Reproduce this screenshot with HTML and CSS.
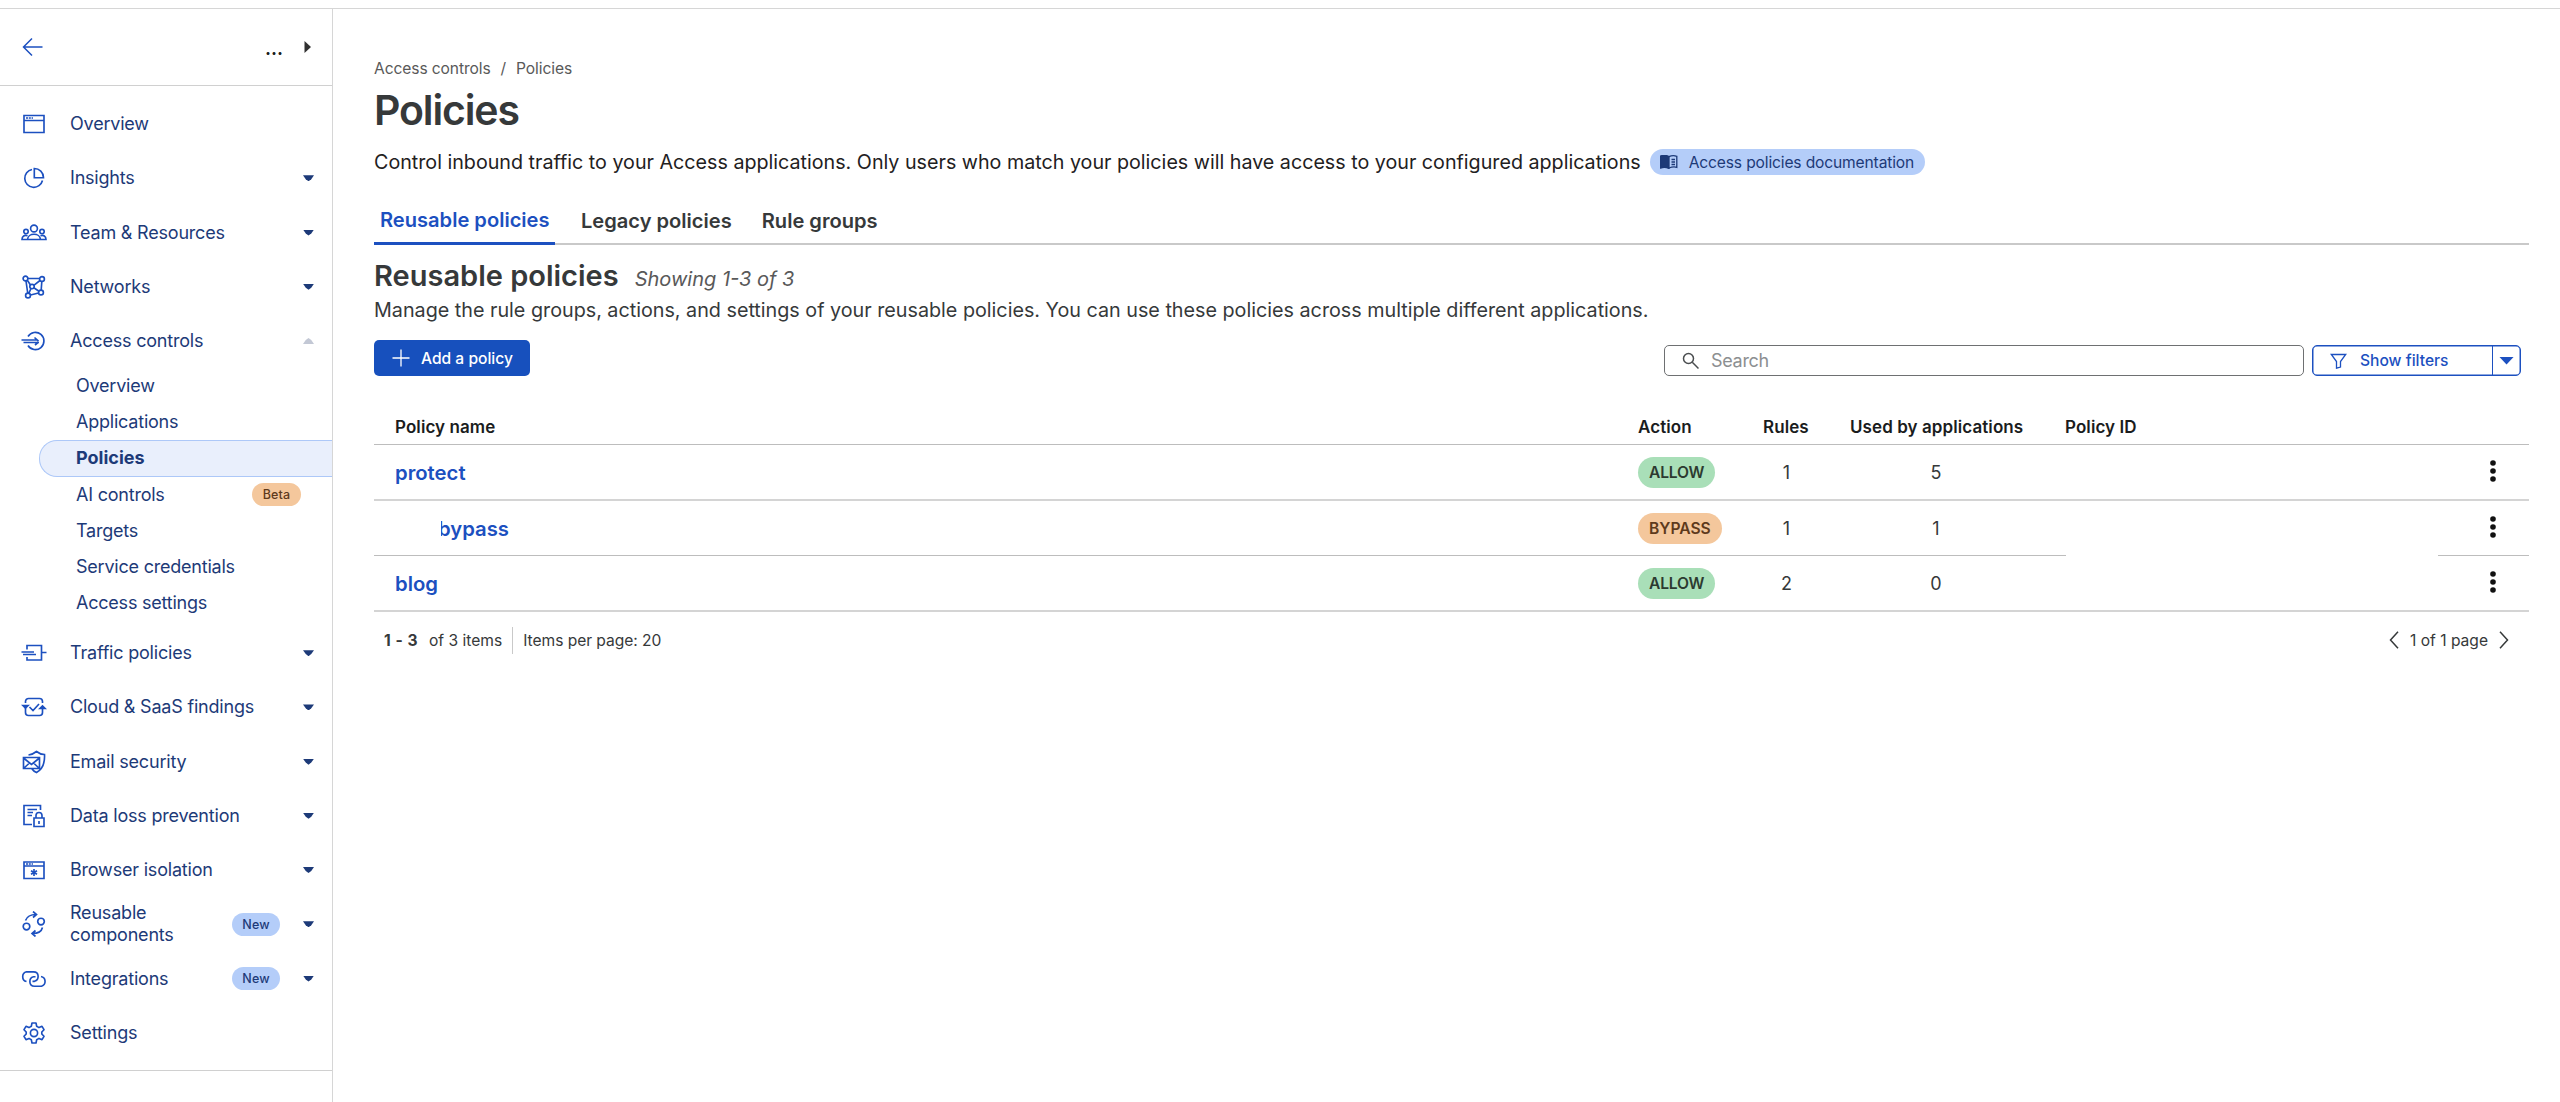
FILE: index.html
```html
<!DOCTYPE html>
<html lang="en">
<head>
<meta charset="utf-8">
<title>Policies</title>
<link rel="stylesheet" href="styles.css">
</head>
<body>
<div class="app">
  <aside class="sidebar">
    <div class="side-head">
      <svg class="back" viewBox="0 0 22 20"><path d="M20.500 10H1.500M10 1.500L1.500 10L10 18.500"/></svg>
      <span class="account">...</span>
      <svg class="next" viewBox="0 0 7 12"><path d="M0.500 0L7 6L0.500 12Z"/></svg>
    </div>
    <nav class="nav">
      <a class="item"><svg class="ico" viewBox="0 0 26 26"><path d="M3 4.500H23V21.500H3ZM3 9.500H23"/><path d="M5 7H12" stroke-dasharray="2 0.800"/></svg><span class="label">Overview</span></a>
      <a class="item"><svg class="ico" viewBox="0 0 26 26"><path d="M11 4.500A9 9 0 1 0 21.500 15.500M13.300 3.500V12.700H22.500A9.200 9.200 0 0 0 13.300 3.500Z"/></svg><span class="label">Insights</span><i class="caret"></i></a>
      <a class="item"><svg class="ico" viewBox="0 0 26 26"><circle cx="13" cy="8.500" r="3.400"/><circle cx="5" cy="11.500" r="2.200"/><circle cx="21" cy="11.500" r="2.200"/><path d="M6.500 19.500C7 12.500 19 12.500 19.500 19.500H1C1 16 3.500 14.800 6.500 15.800M19.500 15.800C22.500 14.800 25 16 25 19.500H19"/></svg><span class="label">Team &amp; Resources</span><i class="caret"></i></a>
      <a class="item"><svg class="ico" viewBox="0 0 26 26"><circle cx="4.500" cy="4.500" r="2.400"/><circle cx="21" cy="5" r="2.400"/><circle cx="11" cy="12.500" r="2.200"/><circle cx="20" cy="18.500" r="2.400"/><circle cx="7" cy="21.500" r="2.400"/><path d="M7 4.500H18.500M5 7L6.700 19M20.800 7.500L20.200 16M9.500 21L17.600 19M6.300 6.200L9.500 11M12.800 11.300L19 6.500M12.800 13.800L18 17.200M10 14.500L7.800 19.300"/></svg><span class="label">Networks</span><i class="caret"></i></a>
      <a class="item"><svg class="ico" viewBox="0 0 26 26"><path d="M7 8.500A8.600 8.600 0 1 1 7 17.500M0.500 12H16.500M2.500 14.500H18M13.500 9.500L17.500 13.200M17.500 14L14 17"/></svg><span class="label">Access controls</span><i class="caret up"></i></a>
      <div class="sub">
        <a class="subitem"><span>Overview</span></a>
        <a class="subitem"><span>Applications</span></a>
        <a class="subitem active"><span>Policies</span></a>
        <a class="subitem"><span>AI controls</span><em class="tag beta">Beta</em></a>
        <a class="subitem"><span>Targets</span></a>
        <a class="subitem"><span>Service credentials</span></a>
        <a class="subitem"><span>Access settings</span></a>
      </div>
      <a class="item"><svg class="ico" viewBox="0 0 26 26"><path d="M6 9.500V5.500H20.500V20H6V17M0.500 12H13M2 14.500H15M20.500 12.500H25.500"/></svg><span class="label">Traffic policies</span><i class="caret"></i></a>
      <a class="item"><svg class="ico" viewBox="0 0 26 26"><path d="M4.500 9V7.500A3 3 0 0 1 7.500 4.500H18.500A3 3 0 0 1 21.500 7.500V9M4.500 14V18.500A3 3 0 0 0 7.500 21.500H18.500A3 3 0 0 0 21.500 18.500V12.500M8.500 13L12 16.500L18 10"/><path class="solid" d="M2 11.500H7L4.500 14ZM19 14.500H24L21.500 12Z"/></svg><span class="label">Cloud &amp; SaaS findings</span><i class="caret"></i></a>
      <a class="item"><svg class="ico" viewBox="0 0 26 26"><path d="M2.500 8.500H18.500V19.500H2.500ZM2.500 9L10.500 15.500L18.500 9M2.500 19.500L8.500 14M18.500 19.500L12.500 14M7.500 6C11 5.500 13 4.500 15.500 2.500C18 4.500 20.500 5.500 23.500 5.500C24 14 22 20 15.500 23.500C13.500 22.700 12 21.500 11 20"/></svg><span class="label">Email security</span><i class="caret"></i></a>
      <a class="item"><svg class="ico" viewBox="0 0 26 26"><path d="M11 21.500H3V2.500H19.500V7M6.500 6.500H16M6.500 9.500H12M6.500 12.500H11M13 15H23V23.500H13ZM15 15V12.500A3 3 0 0 1 21 12.500V15M18 18V21"/></svg><span class="label">Data loss prevention</span><i class="caret"></i></a>
      <a class="item"><svg class="ico" viewBox="0 0 26 26"><path d="M3 5H23V21.500H3ZM3 9H23M13 12V19M10 13.800L16 17.200M16 13.800L10 17.200"/><path d="M5 7H12" stroke-dasharray="2 0.800"/></svg><span class="label">Browser isolation</span><i class="caret"></i></a>
      <a class="item"><svg class="ico" viewBox="0 0 26 26"><circle cx="5.500" cy="15.500" r="3.300"/><circle cx="20" cy="10.500" r="3.300"/><path d="M4.500 9.500C6 5.500 9.500 3.500 15 3.500M12 0.500L15.500 3.500L12 6.500M21.500 16.500C20.500 20.500 17 22.500 11.500 22.500M14.500 19.500L11 22.500L14.500 25.500"/></svg><span class="label two">Reusable components</span><em class="tag new">New</em><i class="caret"></i></a>
      <a class="item"><svg class="ico wide" viewBox="0 0 28 26"><path d="M6.500 15.500A5 5 0 0 1 6.500 5.800H13.500C19.500 5.800 19.500 14 14.500 15.300H12.500M21 10.500A5 5 0 0 1 21.500 20.200H14.500C8.500 20.200 8.500 12 13.500 10.700H15.500"/></svg><span class="label">Integrations</span><em class="tag new">New</em><i class="caret"></i></a>
      <a class="item"><svg class="ico" viewBox="0 0 26 26"><circle cx="13" cy="13" r="3.600"/><path stroke-linejoin="round" d="M11 3H15L15.700 6.300L18 7.600L21 6.300L23 9.700L20.800 12V14L23 16.300L21 19.700L18 18.400L15.700 19.700L15 23H11L10.300 19.700L8 18.400L5 19.700L3 16.300L5.200 14V12L3 9.700L5 6.300L8 7.600L10.300 6.300Z"/></svg><span class="label">Settings</span></a>
    </nav>
  </aside>
  <main class="main">
    <div class="crumbs"><span>Access controls</span><span>/</span><span>Policies</span></div>
    <h1><span>Policies</span></h1>
    <div class="intro">
      <span class="lead">Control inbound traffic to your Access applications. Only users who match your policies will have access to your configured applications</span>
      <a class="doc"><svg viewBox="0 0 18 14"><path class="solid" d="M0.500 1C3.500 0 6.500 0.200 9 1.500V13.500C6.500 12.300 3.500 12.200 0.500 13Z"/><path d="M9 1.700C11.500 0.500 14.500 0.500 16.800 1.300V12.300C14.500 11.700 11.500 12 9 13M11.500 4.500H15M11.500 7H15M11.500 9.500H15"/></svg><span>Access policies documentation</span></a>
    </div>
    <div class="tabs"><a class="tab on"><span>Reusable policies</span></a><a class="tab legacy"><span>Legacy policies</span></a><a class="tab"><span>Rule groups</span></a></div>
    <div class="heading"><h2><span>Reusable policies</span></h2><span class="showing">Showing 1-3 of 3</span></div>
    <p class="desc"><span>Manage the rule groups, actions, and settings of your reusable policies. You can use these policies across multiple different applications.</span></p>
    <div class="toolbar">
      <button class="add"><svg viewBox="0 0 18 18"><path d="M9 0.500V17.500M0.500 9H17.500"/></svg><span>Add a policy</span></button>
      <div class="tools">
        <div class="search"><svg viewBox="0 0 18 18"><circle cx="6.500" cy="6.500" r="5"/><path d="M10.300 10.300L16.500 16.500"/></svg><span>Search</span></div>
        <div class="filter"><div class="fmain"><svg viewBox="0 0 16 16"><path d="M0.800 1.500H15.200L10 8.500V14L6 15.200V8.500Z"/></svg><span>Show filters</span></div><div class="fdrop"><i></i></div></div>
      </div>
    </div>
    <div class="table">
      <div class="row head"><span class="name">Policy name</span><span>Action</span><span class="rules">Rules</span><span class="used">Used by applications</span><span>Policy ID</span></div>
      <div class="row"><a class="name"><span>protect</span></a><div><b class="act allow">ALLOW</b></div><span class="num">1</span><span class="num">5</span><span></span><svg class="more" viewBox="0 0 6 22"><circle cx="3" cy="3" r="2.800"/><circle cx="3" cy="11" r="2.800"/><circle cx="3" cy="19" r="2.800"/></svg></div>
      <div class="row broken"><a class="name indent"><span>bypass</span></a><div><b class="act bypass">BYPASS</b></div><span class="num">1</span><span class="num">1</span><span></span><svg class="more" viewBox="0 0 6 22"><circle cx="3" cy="3" r="2.800"/><circle cx="3" cy="11" r="2.800"/><circle cx="3" cy="19" r="2.800"/></svg></div>
      <div class="row"><a class="name"><span>blog</span></a><div><b class="act allow">ALLOW</b></div><span class="num">2</span><span class="num">0</span><span></span><svg class="more" viewBox="0 0 6 22"><circle cx="3" cy="3" r="2.800"/><circle cx="3" cy="11" r="2.800"/><circle cx="3" cy="19" r="2.800"/></svg></div>
    </div>
    <div class="pager">
      <strong>1 - 3</strong><span class="of">of 3 items</span><span class="per">Items per page: 20</span>
      <div class="pages"><svg viewBox="0 0 10 18"><path d="M9 0.800L1.500 9L9 17.200"/></svg><span>1 of 1 page</span><svg viewBox="0 0 10 18"><path d="M1 0.800L8.500 9L1 17.200"/></svg></div>
    </div>
  </main>
</div>
</body>
</html>
```
FILE: styles.css
```css
* { box-sizing: border-box; }
html, body { height: 100%; }
body { margin: 0; background: #fff; color: #36393a; font-family: Inter, "Liberation Sans", sans-serif; padding-top: 8px; overflow: hidden; }
svg { display: block; fill: none; stroke: currentColor; stroke-width: 1.5; flex: none; }
.solid { fill: currentColor; }
h1, h2, p { margin: 0; }
.app { display: flex; height: 1094px; border-top: 1px solid #d6d6d6; }

/* Sidebar */
.sidebar { width: 333px; flex: none; border-right: 1px solid #d6d6d6; color: #1d3a78; }
.side-head { height: 77px; border-bottom: 1px solid #d0d0d0; display: flex; align-items: center; padding: 0 21px 0 22px; }
.back { width: 22px; height: 20px; color: #1c50c0; }
.account { margin-left: auto; margin-right: 21px; padding-top: 3px; color: #1d1d1d; font-size: 18px; font-weight: 700; line-height: 24px; }
.next { width: 7px; height: 12px; color: #313131; fill: currentColor; stroke: none; }
.nav { height: 985px; padding-top: 11px; border-bottom: 1px solid #d0d0d0; }
.item { height: 54.220px; display: flex; align-items: center; padding: 0 18px 0 21px; }
.ico { width: 26px; height: 26px; color: #1c50c0; stroke-width: 1.650; }
.ico.wide { width: 28px; margin: 0 -1px; }
.label { margin-left: 23px; margin-right: auto; font-size: 18px; line-height: 22px; letter-spacing: -0.200px; }
.label.two { width: 130px; }
.caret { width: 11px; height: 6px; background: #1d3a78; clip-path: polygon(0 0, 100% 0, 75% 65%, 50% 100%, 25% 65%); }
.caret.up { background: #c3c8d5; transform: scaleY(-1); }
.tag { font-style: normal; font-size: 12.500px; font-weight: 500; line-height: 23px; height: 23px; border-radius: 12px; text-align: center; letter-spacing: 0.150px; }
.new { width: 48px; background: #b4cdf9; margin-right: 23px; }
.beta { width: 49px; background: #f4c79c; color: #5e3a1c; margin-left: auto; margin-right: 31px; }
.sub { padding-bottom: 5px; }
.subitem { height: 36.150px; margin-left: 39px; padding-left: 37px; display: flex; align-items: center; font-size: 18px; line-height: 22px; letter-spacing: -0.220px; }
.subitem.active { background: #e9effc; border: 1px solid #adc8f8; border-right: 0; border-radius: 18px 0 0 18px; padding-left: 36px; font-weight: 700; letter-spacing: 0; }

/* Page header */
.main { flex: 1; padding: 49px 31px 0 41px; }
.crumbs { display: flex; gap: 10px; color: #595959; font-size: 15.600px; line-height: 22px; letter-spacing: -0.100px; }
h1 { font-size: 41px; font-weight: 600; line-height: 50px; margin-top: 5px; letter-spacing: -1.150px; }
.intro { display: flex; align-items: center; gap: 9px; height: 30px; color: #1f2122; margin-top: 12px; }
.lead { font-size: 19.690px; white-space: nowrap; }
.doc { display: flex; align-items: center; gap: 11px; width: 275px; height: 26px; border-radius: 13px; background: #b4cdf9; color: #1d3a78; padding-left: 10px; font-size: 15.600px; white-space: nowrap; letter-spacing: -0.150px; }
.doc svg { width: 18px; height: 14px; stroke-width: 1.300; }
.tabs { display: flex; height: 41px; margin-top: 27px; border-bottom: 2px solid #c9c9c9; font-size: 20.100px; font-weight: 600; gap: 26px; }
.tab { line-height: 30px; padding-top: 2px; height: 41px; white-space: nowrap; }
.tab.legacy { margin-right: 4px; }
.tab.on { width: 181px; color: #1c50c0; border-bottom: 3px solid #1c50c0; padding: 1px 0 0 6px; }
.heading { display: flex; align-items: baseline; gap: 16px; height: 40px; margin-top: 11px; }
h2 { font-size: 29px; font-weight: 600; line-height: 40px; }
.showing { font-size: 20px; font-style: italic; color: #595959; }
.desc { font-size: 19.740px; line-height: 28px; white-space: nowrap; }

/* Toolbar */
.toolbar { display: flex; justify-content: space-between; margin-top: 16px; height: 37px; }
.add { display: flex; align-items: center; gap: 11px; width: 156px; height: 36px; padding: 0 0 0 18px; border: 0; border-radius: 5px; background: #1750bd; color: #fff; font: 500 15.600px Inter, sans-serif; white-space: nowrap; }
.add svg { width: 18px; height: 18px; stroke-width: 1.300; }
.tools { display: flex; gap: 8px; padding: 5px 8px 0 0; }
.search { width: 640px; height: 31px; border: 1.500px solid #6e7072; border-radius: 5px; display: flex; align-items: center; gap: 11px; padding-left: 17px; color: #8c8f91; font-size: 18px; letter-spacing: -0.300px; }
.search svg { width: 18px; height: 18px; color: #4a4d4f; }
.filter { width: 209px; height: 31px; border: 1.500px solid #1c50c0; border-radius: 5px; display: flex; color: #1c50c0; font-size: 15.600px; font-weight: 500; box-shadow: inset 0 0 0 0.500px #1c50c0; }
.fmain { flex: 1; display: flex; align-items: center; gap: 13px; padding-left: 17px; }
.fmain svg { width: 17px; height: 16px; stroke-width: 1.300; }
.fdrop { width: 28px; border-left: 1px solid #1c50c0; display: grid; place-items: center; }
.fdrop i { width: 15px; height: 8px; background: #1c50c0; clip-path: polygon(0 0, 100% 0, 50% 100%); }

/* Policy table */
.table { margin-top: 27px; }
.row { display: grid; grid-template-columns: 1264px 110px 77px 222px 443px 6px; align-items: center; height: 56px; border-bottom: 2px solid #d4d4d4; }
.row.head { height: 41px; color: #1a1c1d; font-size: 17px; font-weight: 600; padding-top: 5px; border-bottom: 1px solid #bdbdbd; grid-template-columns: 1264px 110px 77px 240px 425px; letter-spacing: 0.080px; }
.row.broken { height: 55px; border: 0; background: linear-gradient(to right, #bdbdbd 1692px, transparent 1692px 2064px, #bdbdbd 2064px) bottom / 100% 1px no-repeat; }
.rules { margin-left: 15px; }
.used { margin-left: 25px; white-space: nowrap; }
.name { padding-left: 21px; }
a.name { color: #1c50c0; font-size: 20.300px; font-weight: 600; }
a.name.indent { padding-left: 64px; clip-path: inset(0 0 0 67px); }
.act { display: inline-block; height: 31px; line-height: 31px; border-radius: 15.500px; padding: 0 11px; font-size: 15.600px; font-weight: 600; vertical-align: middle; letter-spacing: -0.200px; }
.allow { background: #a9dfb8; color: #2c3a30; }
.bypass { background: #f4c79c; color: #5e3a1c; letter-spacing: 0; }
.num { font-size: 18px; text-align: center; }
.more { width: 6px; height: 22px; fill: #111; stroke: none; margin-top: -3px; }

/* Pagination */
.pager { display: flex; align-items: center; height: 28px; margin-top: 14px; padding-left: 10px; font-size: 15.600px; }
.pager strong { letter-spacing: 0.500px; }
.of { margin-left: 11px; }
.per { margin-left: 10px; padding-left: 10px; border-left: 1px solid #c9c9c9; line-height: 27px; letter-spacing: -0.050px; }
.pages { margin-left: auto; margin-right: 20px; display: flex; align-items: center; gap: 11px; }
.pages svg { width: 10px; height: 18px; }
```
